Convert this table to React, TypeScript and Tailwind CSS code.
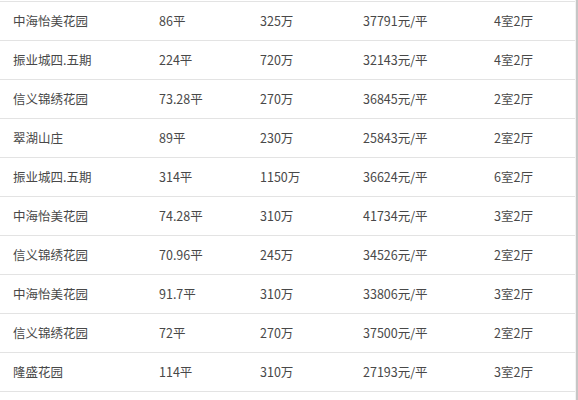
const rows = [
  ["中海怡美花园", "86平", "325万", "37791元/平", "4室2厅"],
  ["振业城四.五期", "224平", "720万", "32143元/平", "4室2厅"],
  ["信义锦绣花园", "73.28平", "270万", "36845元/平", "2室2厅"],
  ["翠湖山庄", "89平", "230万", "25843元/平", "2室2厅"],
  ["振业城四.五期", "314平", "1150万", "36624元/平", "6室2厅"],
  ["中海怡美花园", "74.28平", "310万", "41734元/平", "3室2厅"],
  ["信义锦绣花园", "70.96平", "245万", "34526元/平", "2室2厅"],
  ["中海怡美花园", "91.7平", "310万", "33806元/平", "3室2厅"],
  ["信义锦绣花园", "72平", "270万", "37500元/平", "2室2厅"],
  ["隆盛花园", "114平", "310万", "27193元/平", "3室2厅"],
];

export default function App() {
  return (
    <div className="w-[578px] h-[400px] bg-white overflow-hidden flex font-['Noto_Sans_CJK_SC',sans-serif] text-[12.5px] text-[#484848]">
      <div className="w-[576px] pt-[1px] border-r border-[#f2f2f2]">
        {rows.map((r, i) => (
          <div
            key={i}
            className="grid grid-cols-[146px_101px_103px_131px_1fr] items-center h-[39px] pl-[13px] border-t border-[#e3e3e3]"
          >
            {r.map((c, j) => (
              <span key={j} className="leading-none whitespace-nowrap">
                {c}
              </span>
            ))}
          </div>
        ))}
        <div className="border-t border-[#e3e3e3]" />
      </div>
      <div className="w-[2px] bg-[#c6c6c6]" />
    </div>
  );
}
